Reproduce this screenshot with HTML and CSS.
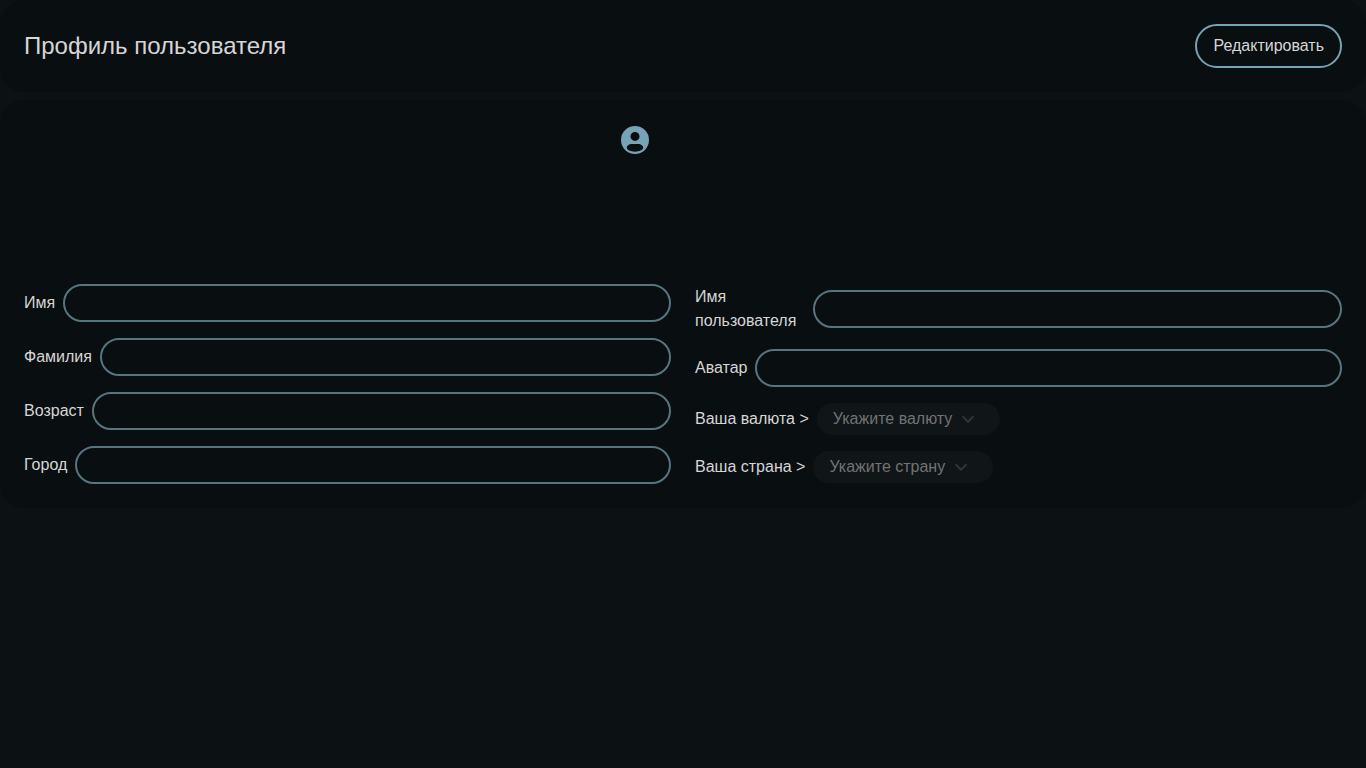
FILE: index.html
```html
<!DOCTYPE html>
<html lang="ru">
<head>
<meta charset="utf-8">
<title>Профиль пользователя</title>
<link rel="stylesheet" href="styles.css">
</head>
<body>
<header class="card header">
  <h1 class="title">Профиль пользователя</h1>
  <button class="edit">Редактировать</button>
</header>
<main class="card">
  <div class="avatar">
    <svg width="32" height="32" viewBox="0 0 32 32"><path fill="#76a3b5" fill-rule="evenodd" d="M16 2a14 14 0 1 0 0 28a14 14 0 0 0 0-28ZM16 7.9a4.5 4.5 0 1 1 0 9a4.5 4.5 0 0 1 0-9ZM12.8 20h6.4c2.8 0 5 1.8 5 3.8c0 2.2-3.8 3.9-8.2 3.9s-8.2-1.7-8.2-3.9c0-2 2.2-3.8 5-3.8Z"/></svg>
  </div>
  <form class="form">
    <div class="column">
      <label class="field"><span>Имя</span><input class="input"></label>
      <label class="field"><span>Фамилия</span><input class="input"></label>
      <label class="field"><span>Возраст</span><input class="input"></label>
      <label class="field"><span>Город</span><input class="input"></label>
    </div>
    <div class="column">
      <label class="field"><span class="wrap-label">Имя пользователя</span><input class="input"></label>
      <label class="field"><span>Аватар</span><input class="input"></label>
      <div class="field"><span>Ваша валюта &gt;</span><button type="button" class="select currency" disabled>Укажите валюту<svg width="16" height="16" viewBox="0 0 16 16"><path d="M3 5.8 8 10.8l5-5"/></svg></button></div>
      <div class="field"><span>Ваша страна &gt;</span><button type="button" class="select country" disabled>Укажите страну<svg width="16" height="16" viewBox="0 0 16 16"><path d="M3 5.8 8 10.8l5-5"/></svg></button></div>
    </div>
  </form>
</main>
</body>
</html>
```
FILE: styles.css
```css
* { box-sizing: border-box; }
body {
  margin: 0;
  min-height: 100vh;
  display: flex;
  flex-direction: column;
  gap: 8px;
  background: #0c1113;
  color: #d6d6d6;
  font: 16px/24px "Liberation Sans", Arial, sans-serif;
}
.card { padding: 24px; border-radius: 24px; background: #090e10; }
.header { display: flex; align-items: center; justify-content: space-between; }
.title { margin: 0; font-size: 24px; font-weight: 400; line-height: 32px; }
.edit {
  height: 44px;
  padding: 0 16px;
  border: 2px solid #76a3b5;
  border-radius: 22px;
  background: transparent;
  color: inherit;
  font: inherit;
}
.avatar { width: 128px; height: 128px; margin: 0 auto 32px; }
.avatar svg { display: block; }
.form { display: grid; grid-template-columns: 1fr 1fr; gap: 24px; }
.column { display: flex; flex-direction: column; justify-content: center; gap: 16px; min-width: 0; }
.field { display: flex; align-items: center; gap: 8px; white-space: nowrap; }
.wrap-label { width: 110px; flex: none; white-space: normal; }
.input {
  flex: 1;
  min-width: 0;
  height: 38px;
  padding: 0 16px;
  border: 2px solid #557680;
  border-radius: 19px;
  background: transparent;
  color: inherit;
  font: inherit;
  outline: none;
}
.select {
  display: flex;
  align-items: center;
  gap: 8px;
  height: 32px;
  padding: 0 16px;
  border: 0;
  border-radius: 16px;
  background: #101517;
  color: #707374;
  font: inherit;
}
.currency { width: 183px; }
.country { width: 180px; }
.select svg { fill: none; stroke: #303536; stroke-width: 2; stroke-linecap: round; stroke-linejoin: round; }
```
